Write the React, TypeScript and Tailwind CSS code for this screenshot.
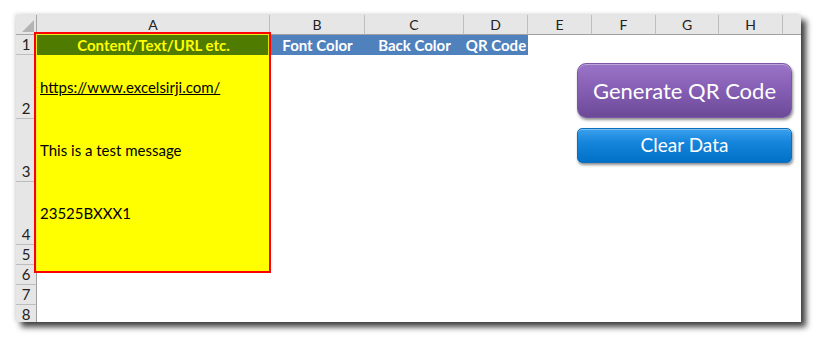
import React from 'react'

const cols = [
  { name: 'A', w: 'w-[233px]' },
  { name: 'B', w: 'w-[95px]' },
  { name: 'C', w: 'w-[99px]' },
  { name: 'D', w: 'w-[64px]' },
  { name: 'E', w: 'w-[64px]' },
  { name: 'F', w: 'w-[64px]' },
  { name: 'G', w: 'w-[63px]' },
  { name: 'H', w: 'w-[64px]' },
  // column I is only partly visible, its letter falls outside the view
  { name: '', w: 'w-[40px]' },
]

const rows = [
  { n: 2, h: 'h-[64px]', text: 'https://www.excelsirji.com/', link: true },
  { n: 3, h: 'h-[63px]', text: 'This is a test message' },
  { n: 4, h: 'h-[63px]', text: '23525BXXX1' },
  { n: 5, h: 'h-[20px]', fill: true },
  { n: 6, h: 'h-[20px]', partial: true },
  { n: 7, h: 'h-[20px]' },
  { n: 8, h: 'h-[20px]' },
]

function HeaderRow() {
  return (
    <div className="flex h-[20px] shrink-0">
      {/* select-all corner */}
      <div className="relative w-[21px] shrink-0 bg-[#e6e6e6] border-r border-b border-[#a6a6a6]">
        <svg className="absolute right-[2px] bottom-[2px]" width="12" height="12" viewBox="0 0 12 12">
          <polygon points="12,0 12,12 0,12" fill="#b4b4b4" />
        </svg>
      </div>
      {cols.map((c, i) => (
        <div
          key={i}
          className={`${c.w} shrink-0 bg-[#e6e6e6] border-r border-b border-r-[#bdbdbd] border-b-[#9f9f9f] flex items-center justify-center text-[14px] text-[#222]`}
        >
          {c.name}
        </div>
      ))}
    </div>
  )
}

function TitleRow() {
  return (
    <div className="flex h-[20px] shrink-0">
      <div className="w-[21px] shrink-0 bg-[#e6e6e6] border-r border-b border-r-[#9f9f9f] border-b-[#bdbdbd] flex items-end justify-center text-[15px] leading-[19px] text-[#222]">
        1
      </div>
      <div className="w-[233px] shrink-0 bg-[#4f7b00] flex items-center justify-center font-bold text-[15px] text-[#ffff00]">
        Content/Text/URL etc.
      </div>
      <div className="w-[95px] shrink-0 bg-[#4f81bd] flex items-center justify-center font-bold text-[15px] text-white">
        Font Color
      </div>
      <div className="w-[99px] shrink-0 bg-[#4f81bd] flex items-center justify-center font-bold text-[15px] text-white">
        Back Color
      </div>
      <div className="w-[64px] shrink-0 bg-[#4f81bd] flex items-center justify-center font-bold text-[15px] text-white">
        QR Code
      </div>
      <div className="flex-1 bg-white" />
    </div>
  )
}

export default function App() {
  return (
    <div className="w-[818px] h-[339px] bg-white pl-[16px] pt-[15px] font-['Lato','Open_Sans',sans-serif]">
      <div className="relative w-[785px] h-[307px] overflow-hidden bg-white flex flex-col shadow-[5px_5px_6px_rgba(0,0,0,0.75),-1px_-1px_4px_rgba(0,0,0,0.15)]">
        <HeaderRow />
        <TitleRow />
        {rows.map((r) => (
          <div key={r.n} className={`flex ${r.h} shrink-0`}>
            <div className="w-[21px] shrink-0 bg-[#e6e6e6] border-r border-b border-r-[#9f9f9f] border-b-[#bdbdbd] flex items-end justify-center text-[15px] leading-[19px] text-[#222]">
              {r.n}
            </div>
            {r.text !== undefined || r.fill ? (
              <div className="w-[233px] shrink-0 bg-[#ffff00] flex items-center pl-[3px] text-[15px] text-black">
                {r.link ? <span className="underline">{r.text}</span> : r.text}
              </div>
            ) : r.partial ? (
              <div className="w-[233px] shrink-0 bg-[linear-gradient(#ffff00_0_8px,white_8px)]" />
            ) : (
              <div className="w-[233px] shrink-0" />
            )}
            <div className="flex-1" />
          </div>
        ))}

        {/* red outline shape over column A */}
        <div className="absolute left-[18px] top-[17px] w-[237px] h-[241px] border-2 border-[#ff0000] shadow-[inset_0_0_0_1px_rgba(255,255,0,0.8)] pointer-events-none" />

        {/* buttons */}
        <button className="absolute left-[561px] top-[48px] w-[215px] h-[55px] rounded-[9px] border border-[#7b58a6] bg-[linear-gradient(#9a74c6,#8760b6_45%,#6c4a97)] shadow-[1px_2px_3px_rgba(0,0,0,0.45),inset_0_1px_0_rgba(255,255,255,0.35)] text-white text-[22px] font-['Lato',sans-serif] flex items-center justify-center">
          Generate QR Code
        </button>
        <button className="absolute left-[561px] top-[113px] w-[215px] h-[35px] rounded-[5px] border border-[#0b6fbd] bg-[linear-gradient(#3aa0ec,#1685dc_40%,#0071c7)] shadow-[1px_2px_3px_rgba(0,0,0,0.45),inset_0_1px_0_rgba(255,255,255,0.35)] text-white text-[19px] font-['Lato',sans-serif] flex items-center justify-center">
          Clear Data
        </button>
      </div>
    </div>
  )
}
